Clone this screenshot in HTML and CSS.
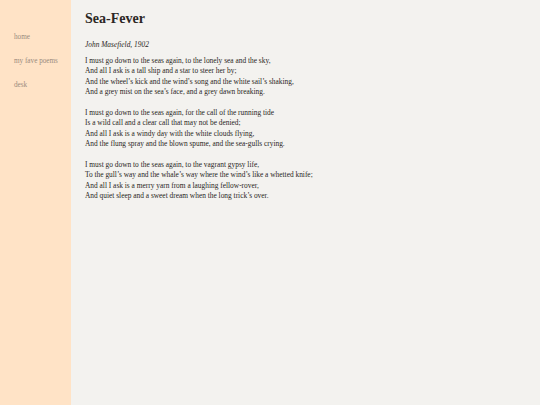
FILE: index.html
```html
<!DOCTYPE html>
<html>
<head>
<meta charset="utf-8">
<link rel="stylesheet" href="styles.css">
</head>
<body>
<div class="layout">
  <nav class="sidebar">
    <a class="nav-link" href="#">home</a>
    <a class="nav-link" href="#">my fave poems</a>
    <a class="nav-link" href="#">desk</a>
  </nav>
  <main class="content">
    <h1 class="title">Sea-Fever</h1>
    <p class="author">John Masefield, 1902</p>
    <div class="poem">
      <p class="stanza">I must go down to the seas again, to the lonely sea and the sky,<br>And all I ask is a tall ship and a star to steer her by;<br>And the wheel’s kick and the wind’s song and the white sail’s shaking,<br>And a grey mist on the sea’s face, and a grey dawn breaking.</p>
      <p class="stanza">I must go down to the seas again, for the call of the running tide<br>Is a wild call and a clear call that may not be denied;<br>And all I ask is a windy day with the white clouds flying,<br>And the flung spray and the blown spume, and the sea-gulls crying.</p>
      <p class="stanza">I must go down to the seas again, to the vagrant gypsy life,<br>To the gull’s way and the whale’s way where the wind’s like a whetted knife;<br>And all I ask is a merry yarn from a laughing fellow-rover,<br>And quiet sleep and a sweet dream when the long trick’s over.</p>
    </div>
  </main>
</div>
</body>
</html>
```

FILE: styles.css
```css
html, body {
  margin: 0;
  padding: 0;
  height: 100%;
}
body {
  font-family: "Liberation Serif", "DejaVu Serif", serif;
  background: #f3f2ef;
  color: #2a2623;
}
.layout {
  display: flex;
  min-height: 100vh;
}
.sidebar {
  width: 71px;
  flex: none;
  background: #ffe3c6;
  display: flex;
  flex-direction: column;
  gap: 14px;
  padding: 32px 0 0 14px;
  box-sizing: border-box;
}
.nav-link {
  font-size: 7.2px;
  line-height: 10px;
  color: #9a8b7e;
  text-decoration: none;
}
.content {
  flex: 1;
  padding: 10px 0 0 14px;
}
.title {
  font-size: 14px;
  font-weight: bold;
  line-height: 17px;
  margin: 0 0 13px 0;
  color: #2b2724;
}
.author {
  font-style: italic;
  font-size: 7.4px;
  line-height: 10px;
  margin: 0 0 6px 0;
}
.stanza {
  font-size: 7.4px;
  line-height: 10.4px;
  margin: 0 0 10.4px 0;
}
```
